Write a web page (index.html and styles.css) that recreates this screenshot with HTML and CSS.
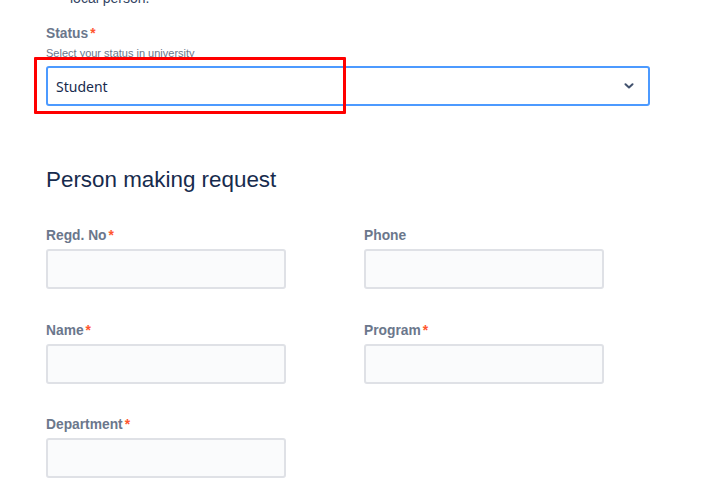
FILE: index.html
```html
<!DOCTYPE html>
<html>
<head>
<meta charset="utf-8">
<link rel="stylesheet" href="styles.css">
</head>
<body>
<div class="page">
  <ul class="prev-list"><li>local person.</li></ul>

  <div class="field status-field">
    <label class="label">Status<span class="req">*</span></label>
    <div class="helper">Select your status in university</div>
    <div class="select-wrap">
      <div class="select">
        <span class="select-value">Student</span>
        <svg class="chevron" width="10" height="6" viewBox="0 0 10 6"><path d="M1.5 1.2 L5 4.5 L8.5 1.2" fill="none" stroke="#42526E" stroke-width="2" stroke-linecap="round" stroke-linejoin="round"/></svg>
      </div>
      <div class="annotation"></div>
    </div>
  </div>

  <h2 class="section-title">Person making request</h2>

  <div class="grid">
    <div class="field">
      <label class="label">Regd. No<span class="req">*</span></label>
      <div class="input"></div>
    </div>
    <div class="field">
      <label class="label">Phone</label>
      <div class="input"></div>
    </div>
    <div class="field">
      <label class="label">Name<span class="req">*</span></label>
      <div class="input"></div>
    </div>
    <div class="field">
      <label class="label">Program<span class="req">*</span></label>
      <div class="input"></div>
    </div>
    <div class="field">
      <label class="label">Department<span class="req">*</span></label>
      <div class="input"></div>
    </div>
  </div>
</div>
</body>
</html>
```
FILE: styles.css
```css
html, body {
  margin: 0;
  padding: 0;
  background: #ffffff;
}
body {
  font-family: "Liberation Sans", Arial, sans-serif;
  color: #172B4D;
  overflow: hidden;
}
.page {
  padding-left: 46px;
  width: 604px;
}
.prev-list {
  margin: -10px 0 0 0;
  padding-left: 24px;
  list-style: none;
  font-size: 14px;
  line-height: 16px;
  color: #344563;
}
.field {
  display: flex;
  flex-direction: column;
}
.status-field {
  margin-top: 20px;
}
.label {
  font-size: 13.8px;
  font-weight: bold;
  color: #6B778C;
  line-height: 16px;
  display: block;
}
.req {
  color: #FF5630;
  margin-left: 2px;
}
.helper {
  font-size: 11px;
  line-height: 12px;
  color: #6B778C;
  margin-top: 5px;
}
.select-wrap {
  position: relative;
  margin-top: 7px;
}
.select {
  height: 40px;
  box-sizing: border-box;
  border: 2px solid #4C9AFF;
  border-radius: 3px;
  background: #fff;
  display: flex;
  align-items: center;
  justify-content: space-between;
  padding: 0 14px 0 8px;
}
.select-value {
  font-family: "Noto Sans", sans-serif;
  font-size: 14px;
  color: #172B4D;
}
.annotation {
  position: absolute;
  left: -12px;
  top: -9px;
  width: 306px;
  height: 51px;
  border: 3px solid #FF0000;
  border-radius: 1px;
}
.section-title {
  font-size: 22.4px;
  font-weight: normal;
  color: #172B4D;
  margin: 60px 0 0 0;
  line-height: 28px;
}
.grid {
  display: grid;
  grid-template-columns: 240px 240px;
  column-gap: 78px;
  row-gap: 33.5px;
  margin-top: 34px;
}
.grid .label {
  margin-bottom: 5px;
}
.input {
  height: 40px;
  box-sizing: border-box;
  border: 2px solid #DFE1E6;
  border-radius: 3px;
  background: #FAFBFC;
}
```
